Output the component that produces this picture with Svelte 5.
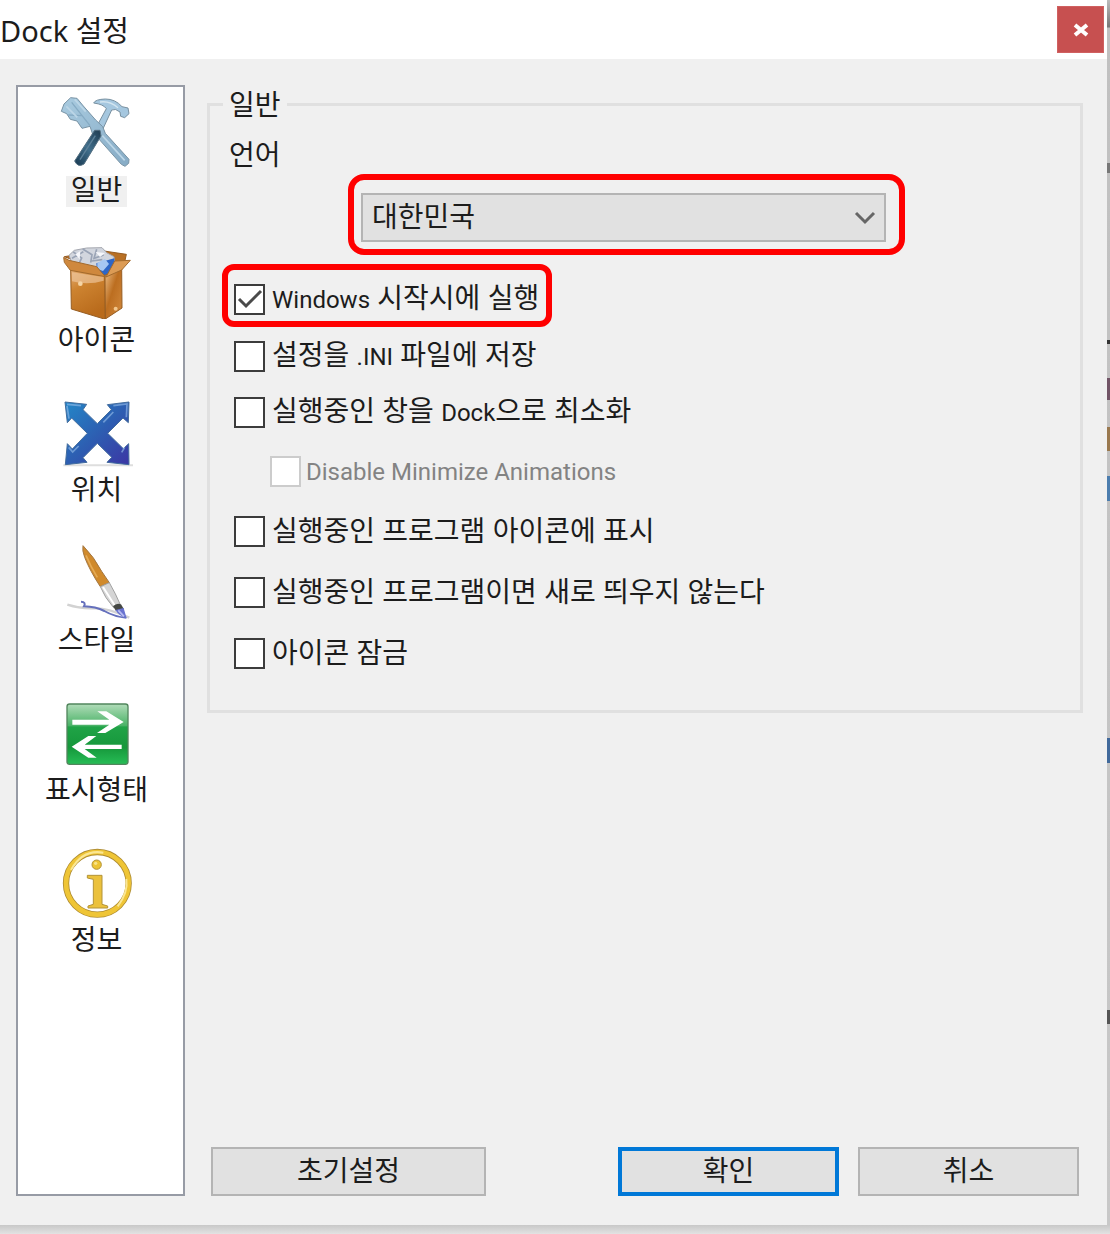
<script>
  const categories = [
    { id: 'general', label: '일반' },
    { id: 'icons', label: '아이콘' },
    { id: 'position', label: '위치' },
    { id: 'style', label: '스타일' },
    { id: 'behavior', label: '표시형태' },
    { id: 'about', label: '정보' }
  ];
  let active = $state('general');

  // Latin runs are set smaller than the Hangul around them.
  const runs = (text) => text.split(/([.A-Za-z][A-Za-z ]*[A-Za-z])/).filter(Boolean);
  const isLatin = (run) => /[A-Za-z]/.test(run);
</script>

{#snippet picture(id)}
  {#if id === 'general'}
    <svg class="icon" viewBox="180 45 222 222" aria-hidden="true">
      <defs>
        <linearGradient id="steel" x1="0" y1="0" x2="1" y2="1">
          <stop offset="0" stop-color="#a9cbe0" /><stop offset="1" stop-color="#86abc5" />
        </linearGradient>
        <linearGradient id="grip" x1="1" y1="0" x2="0" y2="1">
          <stop offset="0" stop-color="#1e3b50" /><stop offset=".5" stop-color="#416f8c" /><stop offset="1" stop-color="#173850" />
        </linearGradient>
      </defs>
      <path d="M335 90 L305 155 L287 145 L319 86 Q311 73 281 69 Q286 58 316 57 Q346 57 366 80 L384 84 L387 101 L374 113 L362 109 L360 96 Q346 84 335 90Z" fill="#a5c7df" stroke="#7890a0" stroke-width="3" />
      <path d="M300 66 Q330 62 354 83" fill="none" stroke="#d3e5f0" stroke-width="4" />
      <path d="M184 94 L192 72 L212 53 L231 55 L250 78 L287 120 L308 140 L316 160 L387 238 L386 250 L375 259 L364 253 L292 172 L278 163 L270 139 L246 145 L231 123 L211 118 L200 101Z" fill="url(#steel)" stroke="#7893a5" stroke-width="3" />
      <path d="M205 105 L245 107 M215 67 L270 137" stroke="#86abc4" stroke-width="4" fill="none" />
      <path d="M199 79 L232 112 M224 58 L257 95 M307 167 L374 241" stroke="#bcd6e7" stroke-width="5" />
      <path d="M284 151 L300 151 L303 168 L252 252 Q234 264 224 243Z" fill="url(#grip)" stroke="#536e80" stroke-width="3" />
      <path d="M286 167 L240 239" stroke="#5d8199" stroke-width="4" />
    </svg>
  {:else if id === 'icons'}
    <svg class="icon" viewBox="180 495 222 222" aria-hidden="true">
      <defs>
        <linearGradient id="boxFront" x1="0" y1="0" x2=".4" y2="1">
          <stop offset="0" stop-color="#e6b07a" /><stop offset=".4" stop-color="#cd8330" /><stop offset="1" stop-color="#b96b1c" />
        </linearGradient>
        <linearGradient id="boxSide" x1="0" y1="0" x2="1" y2="1">
          <stop offset="0" stop-color="#efc28b" /><stop offset=".45" stop-color="#bc6e20" /><stop offset="1" stop-color="#d28a3e" />
        </linearGradient>
      </defs>
      <path d="M193 530 L305 512 L379 523 L372 555 L313 575Z" fill="#b97024" stroke="#965b20" stroke-width="3" />
      <path d="M207 526 L223 511 L260 504 L306 503 L320 518 L342 530 L344 555 L318 590 L287 575 L215 547Z" fill="#d2d6de" stroke="#a4a7af" stroke-width="3" />
      <path d="M220 516 L245 534 L237 551 M248 507 L276 524 L272 548 M290 508 L282 535 L311 525 M216 535 L250 515 M275 543 L307 539" fill="none" stroke="#9aa4b6" stroke-width="5" />
      <path d="M226 523 L241 513 L239 538Z M287 516 L315 519 L300 531Z" fill="#f6f7fb" />
      <path d="M289 550 L343 535 L344 557 L317 590 L291 574Z" fill="#2d66c6" />
      <path d="M292 548 L315 537 L327 552 L309 573 L292 567Z" fill="#a6c7f2" />
      <path d="M212 566 L315 586 L316 718 L214 687Z" fill="url(#boxFront)" stroke="#965d22" stroke-width="3" />
      <path d="M315 586 L365 562 L366 684 L316 717Z" fill="url(#boxSide)" stroke="#965d22" stroke-width="3" />
      <path d="M191 532 L207 541 L290 560 L316 590 L211 571 L193 547Z" fill="#cf883d" stroke="#a36a2c" stroke-width="3" />
      <path d="M344 543 L391 541 L365 570 L318 591Z" fill="#dc9b54" stroke="#a36a2c" stroke-width="3" />
      <path d="M216 577 L311 591 L311 602 Q264 616 216 604Z" fill="#edc398" opacity=".7" />
      <circle cx="241" cy="611" r="7" fill="#f5d5a6" /><circle cx="347" cy="686" r="6" fill="#f2c78c" />
    </svg>
  {:else if id === 'position'}
    <svg class="icon" viewBox="180 45 222 222" aria-hidden="true">
      <defs>
        <linearGradient id="arrows" x1="0" y1="0" x2="1" y2="1">
          <stop offset="0" stop-color="#2387c8" /><stop offset=".5" stop-color="#2d5fb2" /><stop offset="1" stop-color="#3b36a4" />
        </linearGradient>
      </defs>
      <path d="M190 256 H399" stroke="#dedede" stroke-width="6" />
      <path d="M195 66 L260 73 L249 89 L292 131 L334 89 L322 74 L387 66 L385 128 L369 114 L323 160 L370 206 L386 191 L387 254 L321 247 L335 232 L292 190 L249 233 L261 247 L196 254 L202 191 L217 207 L262 160 L215 114 L202 128Z" fill="url(#arrows)" stroke="#426c9d" stroke-width="3" stroke-linejoin="round" />
      <path d="M201 73 L243 77 M201 78 L207 116 M340 77 L381 72 L379 112 M310 127 L340 96 M206 202 L218 216 L236 198 M374 202 L365 217" fill="none" stroke="#91b9e7" stroke-width="5" opacity=".65" />
    </svg>
  {:else if id === 'style'}
    <svg class="icon" viewBox="180 495 222 222" aria-hidden="true">
      <path d="M202 674 Q242 687 282 685 T388 713" fill="none" stroke="#d2d2d2" stroke-width="7" />
      <path d="M243 665 Q259 666 252 679 Q287 680 313 693 Q345 711 379 713" fill="none" stroke="#6570bc" stroke-width="6" />
      <path d="M249 497 Q282 530 305 574 L328 608 L301 620 Q270 573 254 532 Q246 511 249 497Z" fill="#d08a2c" stroke="#a47742" stroke-width="3" />
      <path d="M258 526 Q272 560 292 592" stroke="#e5ab55" stroke-width="5" fill="none" />
      <path d="M301 620 L328 608 Q348 643 360 672 L341 683 Q314 653 301 620Z" fill="#d5d5d5" stroke="#a1a1a1" stroke-width="3" />
      <path d="M309 621 L344 676" stroke="#fff" stroke-width="6" />
      <path d="M339 679 Q350 667 363 673 L372 688 L348 693Z" fill="#454843" />
      <path d="M346 690 L371 684 Q376 702 380 715 Q358 709 346 690Z" fill="#6973d0" />
      <path d="M355 691 L372 709" stroke="#b8bdf1" stroke-width="5" />
    </svg>
  {:else if id === 'behavior'}
    <svg class="icon" viewBox="180 45 222 222" aria-hidden="true">
      <defs>
        <linearGradient id="panel" x1="0" y1="0" x2="0" y2="1">
          <stop offset="0" stop-color="#b1dcb9" /><stop offset=".36" stop-color="#49b266" /><stop offset=".38" stop-color="#20a347" /><stop offset=".72" stop-color="#16983b" /><stop offset="1" stop-color="#27bd56" />
        </linearGradient>
      </defs>
      <rect x="201" y="72" width="183" height="181" rx="8" fill="url(#panel)" stroke="#52865d" stroke-width="4" />
      <path d="M217 119 H328 L292 94 H319 L371 126 L316 159 H291 L328 134 H217Z M365 194 H254 L289 168 H265 L215 200 L265 233 H290 L254 207 H365Z" fill="#fff" />
    </svg>
  {:else}
    <svg class="icon" viewBox="180 495 222 222" aria-hidden="true">
      <circle cx="292" cy="610" r="94" fill="none" stroke="#ae8c32" stroke-width="19" />
      <circle cx="292" cy="610" r="94" fill="none" stroke="#efc536" stroke-width="14" />
      <path d="M213 570 Q248 507 310 518 M379 597 Q385 637 353 679" stroke="#fbe794" stroke-width="6" fill="none" />
      <circle cx="290" cy="554" r="14" fill="#edc436" stroke="#b39338" stroke-width="3" />
      <path d="M262 586 H306 V673 L323 678 V684 H264 V678 L280 673 V598 L262 594Z" fill="#ebc13c" stroke="#b39338" stroke-width="3" />
      <circle cx="287" cy="550" r="5" fill="#f8e38a" />
    </svg>
  {/if}
{/snippet}

{#snippet option(id, text, checked = false, disabled = false)}
  <div class="option">
    <span class="tick">
      <input type="checkbox" {id} {checked} {disabled} />
      <svg viewBox="0 0 31 31" aria-hidden="true"><path d="M5 15 L12 22 L27 7" /></svg>
    </span>
    <label for={id} class:disabled>{#each runs(text) as run}{#if isLatin(run)}<span class="latin">{run}</span>{:else}{run}{/if}{/each}</label>
  </div>
{/snippet}

<div class="screen">
  <main class="window">
    <header>
      <h1>Dock 설정</h1>
      <button class="close" aria-label="닫기">
        <svg viewBox="0 0 16 14" aria-hidden="true"><path d="M2 2 L14 12 M14 2 L2 12" /></svg>
      </button>
    </header>

    <div class="content">
      <nav>
        {#each categories as category}
          <button class="category" class:active={active === category.id} onclick={() => (active = category.id)}>
            {@render picture(category.id)}
            <span>{category.label}</span>
          </button>
        {/each}
      </nav>

      <section>
        <fieldset>
          <legend>일반</legend>
          <label class="language" for="language">언어</label>
          <div class="mark mark-select">
            <div class="dropdown">
              <select id="language"><option>대한민국</option></select>
              <svg viewBox="0 0 22 14" aria-hidden="true"><path d="M2 2 L11 11 L20 2" /></svg>
            </div>
          </div>
          <div class="mark mark-option">{@render option('startup', 'Windows 시작시에 실행', true)}</div>
          <div class="upper">
            {@render option('ini', '설정을 .INI 파일에 저장')}
            {@render option('minimize', '실행중인 창을 Dock으로 최소화')}
          </div>
          <div class="nested">{@render option('animations', 'Disable Minimize Animations', false, true)}</div>
          <div class="lower">
            {@render option('running', '실행중인 프로그램 아이콘에 표시')}
            {@render option('instance', '실행중인 프로그램이면 새로 띄우지 않는다')}
            {@render option('lock', '아이콘 잠금')}
          </div>
        </fieldset>

        <footer>
          <button class="push reset">초기설정</button>
          <button class="push primary">확인</button>
          <button class="push">취소</button>
        </footer>
      </section>
    </div>
  </main>
  <div class="edge" aria-hidden="true">
    <i class="scrap s1"></i><i class="scrap s2"></i><i class="scrap s3"></i><i class="scrap s4"></i>
    <i class="scrap s5"></i><i class="scrap s6"></i><i class="scrap s7"></i>
  </div>
  <div class="shade"></div>
</div>

<style>
  :global(body) {
    margin: 0;
    background: #e0e0e0;
  }
  .screen {
    box-sizing: border-box;
    min-height: 100vh;
    display: grid;
    grid-template-columns: 1fr 3px;
    grid-template-rows: 1fr 9px;
    color: #1c1c1c;
    font: 28px/36px 'Noto Sans', 'Noto Sans CJK KR', sans-serif;
  }
  button, select {
    font: inherit;
    color: inherit;
    margin: 0;
    padding: 0;
    border: 0;
    border-radius: 0;
    background: none;
  }
  .window {
    display: flex;
    flex-direction: column;
    background: #f0f0f0;
  }
  .edge {
    position: relative;
    background: linear-gradient(#bcbcbc, #777 27px, #c0c0c0 28px, #c8c8c8);
  }
  .shade {
    grid-column: 1 / -1;
    background: linear-gradient(#c8c8c8, #e2e2e2);
  }
  .scrap {
    position: absolute;
    right: 0;
    width: 3px;
  }
  .s1 { top: 163px; height: 10px; background: #777; }
  .s2 { top: 340px; height: 4px; background: #333; }
  .s3 { top: 378px; height: 22px; background: #715466; }
  .s4 { top: 427px; height: 24px; background: #99784e; }
  .s5 { top: 476px; height: 25px; background: #4c7dae; }
  .s6 { top: 738px; height: 25px; background: #41699b; }
  .s7 { top: 1010px; height: 14px; background: #555; }

  header {
    display: flex;
    justify-content: space-between;
    align-items: center;
    height: 59px;
    padding-right: 3px;
    background: #fff;
  }
  h1 {
    margin: 0;
    padding-top: 2px;
    font-size: 29px;
    font-weight: 400;
  }
  .close {
    display: grid;
    place-items: center;
    width: 47px;
    height: 47px;
    background: #c75050;
    border: 1px solid #d06060;
  }
  .close svg {
    width: 16px;
    height: 14px;
    stroke: #fff;
    stroke-width: 4;
  }

  .content {
    flex: 1;
    display: grid;
    grid-template-columns: 169px 1fr;
    gap: 22px;
    padding: 26px 24px 29px 16px;
  }
  nav {
    box-sizing: border-box;
    display: flex;
    flex-direction: column;
    gap: 38px;
    padding: 8px 8px 8px 0;
    background: #fff;
    border: 2px solid #979ba5;
  }
  .category {
    display: flex;
    flex-direction: column;
    align-items: center;
    gap: 7px;
  }
  .icon {
    display: block;
    width: 74px;
    height: 74px;
  }
  .category span {
    padding: 0 5px 4px;
    line-height: 27px;
  }
  .active span {
    background: #f0f0f0;
  }

  section {
    display: flex;
    flex-direction: column;
    justify-content: space-between;
    min-width: 0;
  }
  fieldset {
    margin: 1px 0 0;
    padding: 14px 0 39px;
    border: 3px solid #e0e0e0;
    min-width: 0;
  }
  legend {
    margin-left: 13px;
    padding: 0 6px;
  }
  .language {
    display: block;
    padding-left: 19px;
  }
  .mark {
    box-sizing: border-box;
    border: 6px solid #f00;
  }
  .mark-select {
    margin: 2px 175px 9px 138px;
    padding: 13px 13px 7px 7px;
    border-radius: 16px;
  }
  .dropdown {
    display: grid;
    align-items: center;
  }
  .dropdown select, .dropdown svg {
    grid-area: 1 / 1;
  }
  select {
    appearance: none;
    width: 100%;
    height: 49px;
    padding: 0 40px 4px 9px;
    background: #e1e1e1;
    border: 2px solid #b4b4b4;
  }
  .dropdown svg {
    justify-self: end;
    width: 22px;
    height: 14px;
    margin-right: 10px;
    fill: none;
    stroke: #666;
    stroke-width: 3;
    pointer-events: none;
  }
  .mark-option {
    width: fit-content;
    margin: 0 0 11px 12px;
    padding: 11px 7px 4px 6px;
    border-radius: 12px;
  }
  .option {
    display: flex;
    align-items: center;
    gap: 7px;
    height: 36px;
    white-space: nowrap;
  }
  .option label {
    padding-bottom: 2px;
  }
  .latin {
    font-family: Roboto, sans-serif;
    font-size: 24px;
  }
  .tick {
    display: grid;
    flex: none;
    width: 31px;
    height: 31px;
  }
  .tick input, .tick svg {
    grid-area: 1 / 1;
  }
  .tick input {
    appearance: none;
    width: 31px;
    height: 31px;
    margin: 0;
    background: #fff;
    border: 2px solid #3c3c3c;
  }
  .tick input:disabled {
    border-color: #ccc;
  }
  .tick svg {
    display: none;
    fill: none;
    stroke: #4a4a4a;
    stroke-width: 3;
    pointer-events: none;
  }
  .tick input:checked + svg {
    display: block;
  }
  .disabled {
    color: #838383;
  }
  .upper, .lower {
    display: grid;
    gap: 20px;
    padding-left: 24px;
  }
  .lower {
    gap: 25px;
  }
  .nested {
    padding: 23px 0 24px 60px;
  }
  .nested .option {
    gap: 5px;
  }

  footer {
    display: flex;
    gap: 19px;
    padding: 0 4px;
  }
  .push {
    box-sizing: border-box;
    width: 221px;
    height: 49px;
    padding-bottom: 3px;
    background: #e1e1e1;
    border: 2px solid #b4b4b4;
  }
  .reset {
    width: 275px;
    margin-right: auto;
  }
  .primary {
    border: 4px solid #0078d7;
  }
</style>
